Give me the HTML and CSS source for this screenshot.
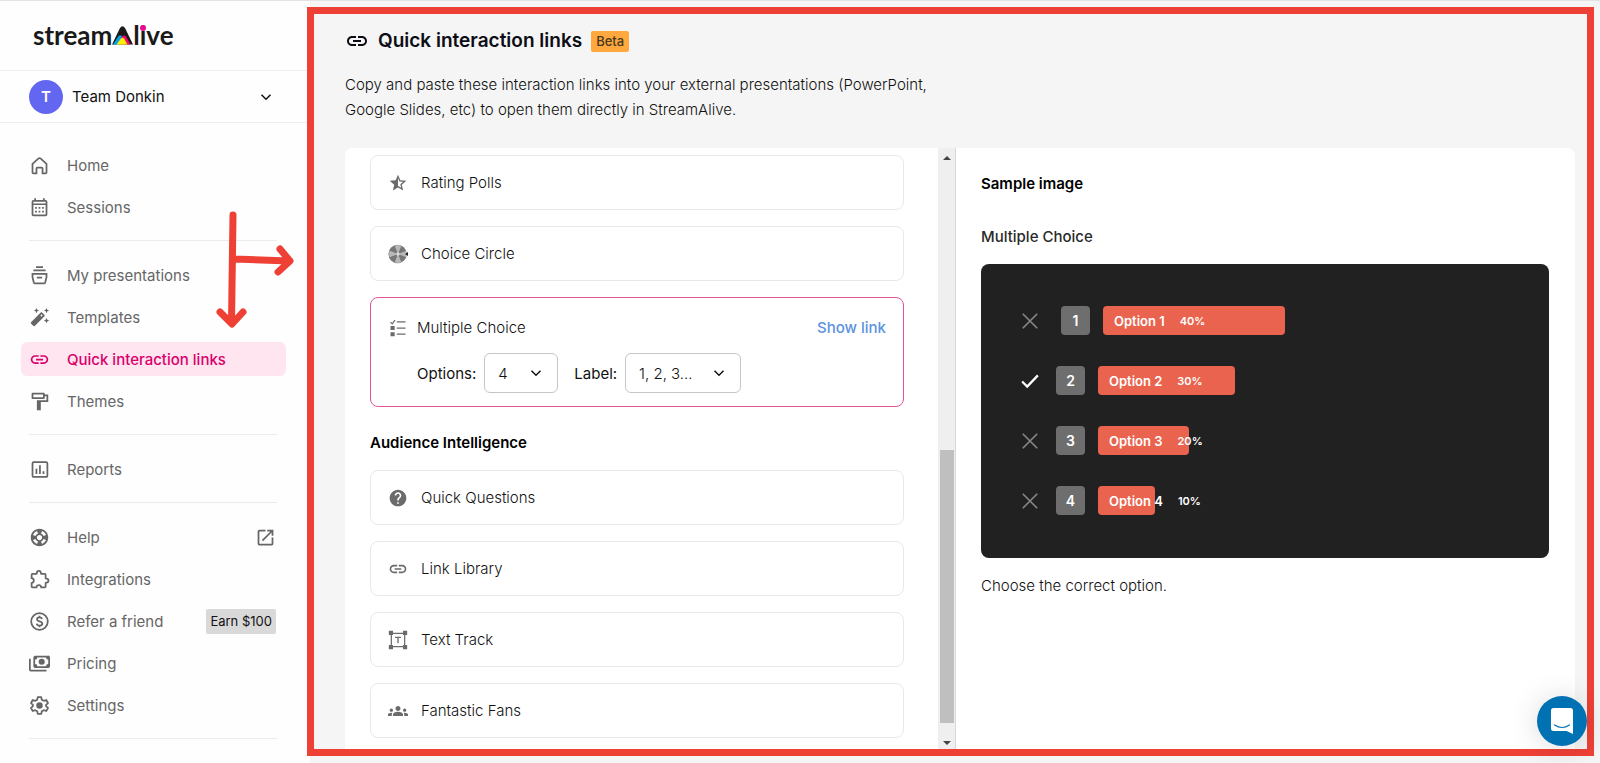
FILE: index.html
```
<!DOCTYPE html>
<html lang="en">
<head>
  <meta charset="UTF-8" />
  <meta name="viewport" content="width=device-width, initial-scale=1.0"/>
  <title>Quick interaction links - StreamAlive</title>
  <link rel="stylesheet" href="styles.css">
</head>
<body>
  <!-- Shared icons -->
  <svg class="sprite" aria-hidden="true">
    <symbol id="icon-link" viewBox="0 0 24 24">
      <path d="M3.9 12c0-1.71 1.39-3.1 3.1-3.1h4V7H7c-2.76 0-5 2.24-5 5s2.24 5 5 5h4v-1.9H7c-1.71 0-3.1-1.39-3.1-3.1zM8 13h8v-2H8v2zm9-6h-4v1.9h4c1.71 0 3.1 1.39 3.1 3.1s-1.39 3.1-3.1 3.1h-4V17h4c2.76 0 5-2.24 5-5s-2.24-5-5-5z"/>
    </symbol>
    <symbol id="icon-chevron" viewBox="0 0 12 12">
      <path d="M1.5 3.8 6 8.2l4.500-4.400" fill="none" stroke="currentColor" stroke-width="1.500"/>
    </symbol>
    <symbol id="icon-cross" viewBox="0 0 16 16">
      <path d="M2 2l12 12M14 2 2 14" fill="none" stroke="currentColor" stroke-width="1.500" stroke-linecap="round"/>
    </symbol>
  </svg>

  <div class="app">
    <aside class="sidebar">
      <div class="brand">
        <a href="#" class="logo" aria-label="streamAlive">
          <span>stream</span><svg class="logo-a" viewBox="0 0 21 19">
            <path d="M0 18.500 8 2Q10.500-1.500 13 2l8 16.500z" fill="#1a1a1a"/>
            <path d="M1 18.500 6.500 10Q8.500 8 10.500 11L7 18.500z" fill="#00a4e4"/>
            <path d="M9 12Q11 8 14 10.500l4.500 8H13z" fill="#ec0b6f"/>
            <path d="M4.500 18.500 9 12.500q1.500-1.500 3 0l3.500 6z" fill="#ffee00"/>
          </svg><span>l</span><span class="logo-i">i</span><span>ve</span>
        </a>
      </div>

      <button class="team" type="button">
        <span class="avatar">T</span>
        <span class="team-name">Team Donkin</span>
        <svg class="team-chevron"><use href="#icon-chevron"/></svg>
      </button>

      <nav class="nav">
        <ul>
          <li><a href="#">
            <svg class="icon outline" viewBox="0 0 24 24"><path d="M4 10.200 10.600 4.200q1.400-1.200 2.800 0L20 10.200V20q0 1-1 1h-3.500v-5.500q0-1-1-1h-5q-1 0-1 1V21H5q-1 0-1-1z"/></svg>
            Home</a></li>
          <li><a href="#">
            <svg class="icon" viewBox="0 0 24 24"><path d="M19 3.500h-1V1.500h-2v2H8v-2H6v2H5a2 2 0 0 0-2 2V20a2 2 0 0 0 2 2h14a2 2 0 0 0 2-2V5.500a2 2 0 0 0-2-2zM5 5.300h14v2H5zM5 20V9.200h14V20zM7 11.500h2v2H7zm4 0h2v2h-2zm4 0h2v2h-2zM7 15.700h2v2H7zm4 0h2v2h-2zm4 0h2v2h-2z"/></svg>
            Sessions</a></li>
        </ul>
        <ul>
          <li><a href="#">
            <svg class="icon outline" viewBox="0 0 24 24"><path d="M8 2.500h8M5 6h14M4 10h16v4l-1.500 6q-.3 1-1.200 1H6.700q-.9 0-1.200-1L4 14zM9 14.500h6"/></svg>
            My presentations</a></li>
          <li><a href="#">
            <svg class="icon" viewBox="0 0 24 24"><path d="M20 7l.94-2.060L23 4l-2.060-.94L20 1l-.94 2.060L17 4l2.060.94zM8.500 7l.94-2.060L11.500 4l-2.060-.94L8.500 1l-.94 2.060L5.500 4l2.060.94zM20 12.500l-.94 2.060-2.060.94 2.060.94.94 2.060.94-2.060L23 15.500l-2.060-.94zM17.710 9.120l-2.830-2.830c-.2-.19-.45-.29-.71-.29-.26 0-.51.1-.71.290L2.290 17.460a1 1 0 0 0 0 1.410l2.830 2.830c.2.200.45.300.71.300s.51-.1.710-.29l11.170-11.170c.39-.39.39-1.030 0-1.420zm-3.540-.7 1.410 1.410L14.410 11 13 9.590z"/></svg>
            Templates</a></li>
          <li class="active"><a href="#" aria-current="page">
            <svg class="icon"><use href="#icon-link"/></svg>
            Quick interaction links</a></li>
          <li><a href="#">
            <svg class="icon" viewBox="0 0 24 24"><path d="M18 4V3a1 1 0 0 0-1-1H4a1 1 0 0 0-1 1v5a1 1 0 0 0 1 1h13a1 1 0 0 0 1-1V6h2v4.500H9V22h4.500v-9.500H22V4zM5 4h11v3H5z"/></svg>
            Themes</a></li>
        </ul>
        <ul>
          <li><a href="#">
            <svg class="icon outline" viewBox="0 0 24 24"><rect x="4" y="3.500" width="17" height="17" rx="1.500"/><path d="M8.500 11v6M12.500 7v10M16.500 14v3"/></svg>
            Reports</a></li>
        </ul>
        <ul>
          <li><a href="#">
            <svg class="icon" viewBox="0 0 24 24"><path d="M12 2C6.480 2 2 6.480 2 12s4.480 10 10 10 10-4.480 10-10S17.520 2 12 2zm7.460 7.120-2.780 1.150a4.982 4.982 0 0 0-2.950-2.940l1.150-2.780c2.100.8 3.770 2.470 4.580 4.570zM12 15c-1.660 0-3-1.340-3-3s1.340-3 3-3 3 1.340 3 3-1.340 3-3 3zM9.130 4.540l1.170 2.780a5 5 0 0 0-2.980 2.970L4.540 9.130a7.984 7.984 0 0 1 4.590-4.590zM4.540 14.870l2.780-1.150a4.968 4.968 0 0 0 2.970 2.960l-1.170 2.780a7.996 7.996 0 0 1-4.580-4.590zm10.340 4.590-1.150-2.780a4.978 4.978 0 0 0 2.950-2.970l2.780 1.170a8.007 8.007 0 0 1-4.580 4.580z"/></svg>
            Help
            <svg class="icon trailing" viewBox="0 0 24 24"><path d="M19 19H5V5h7V3H5a2 2 0 0 0-2 2v14a2 2 0 0 0 2 2h14c1.100 0 2-.9 2-2v-7h-2v7zM14 3v2h3.590l-9.830 9.830 1.410 1.410L19 6.410V10h2V3h-7z"/></svg></a></li>
          <li><a href="#">
            <svg class="icon outline" viewBox="0 0 24 24"><path d="M3 6.500q0-1 1-1h4.500q.5 0 .5-1a2 2 0 0 1 4.500 0q0 1 .5 1H18q1 0 1 1v4q0 .5 1 .5a2 2 0 0 1 0 4.500q-1 0-1 .5v4q0 1-1 1h-4q-.3-2.500-2.750-2.500T8.500 21H4q-1 0-1-1v-4q2.500-.3 2.500-2.750T3 10.500z"/></svg>
            Integrations</a></li>
          <li><a href="#">
            <svg class="icon outline" viewBox="0 0 24 24"><circle cx="12" cy="12" r="9.500"/><path d="M15 9.300q-.5-2-3-2-2.800 0-2.800 2.200 0 1.700 2.800 2.400 3.200.7 3.200 2.600 0 2.200-3.100 2.200-2.900 0-3.200-2.200M12 5.500v2M12 16.500v2"/></svg>
            Refer a friend
            <span class="reward">Earn $100</span></a></li>
          <li><a href="#">
            <svg class="icon" viewBox="0 0 24 24"><path fill-rule="evenodd" d="M7 3h14.500A2.200 2.200 0 0 1 24 5v10a2 2 0 0 1-2 2H7a2 2 0 0 1-2-2V5a2 2 0 0 1 2-2zm2.500 2Q9.500 7.500 7 7.500v5Q9.500 12.500 9.500 15h10q0-2.500 2.500-2.500v-5Q19.500 7.500 19.500 5z"/><circle cx="14.500" cy="10" r="3.500"/><path d="M0 6.500h2V19h18v2H2a2 2 0 0 1-2-2z"/></svg>
            Pricing</a></li>
          <li><a href="#">
            <svg class="icon outline" viewBox="0 0 24 24"><path d="M10 2.500h4l.6 2.900 2.200 1.300 2.900-1 2 3.500-2.200 2v1.600l2.200 2-2 3.500-2.900-1-2.200 1.300-.6 2.900h-4l-.6-2.900-2.200-1.300-2.900 1-2-3.500 2.200-2v-1.600l-2.200-2 2-3.500 2.900 1 2.200-1.300z" stroke-linejoin="round"/><circle cx="12" cy="12" r="2.700" fill="currentColor"/></svg>
            Settings</a></li>
        </ul>
      </nav>
    </aside>

    <main class="main">
      <header class="page-header">
        <h1>
          <svg class="title-icon"><use href="#icon-link"/></svg>
          Quick interaction links
          <span class="beta">Beta</span>
        </h1>
        <p>Copy and paste these interaction links into your external presentations (PowerPoint, Google Slides, etc) to open them directly in StreamAlive.</p>
      </header>

      <div class="panel">
        <section class="interactions">
          <div class="list">
            <a href="#" class="item">
              <svg class="item-icon" viewBox="0 0 24 24"><path d="m22 9.240-7.190-.62L12 2 9.190 8.630 2 9.240l5.460 4.730L5.820 21 12 17.270 18.180 21l-1.630-7.030L22 9.240zM12 15.400V6.100l1.710 4.040 4.380.38-3.320 2.880 1 4.280L12 15.400z"/></svg>
              Rating Polls
            </a>
            <a href="#" class="item">
              <svg class="item-icon" viewBox="0 0 24 24">
                <circle cx="11.500" cy="12" r="11" fill="#777"/>
                <path d="M12 12 8 2a11 11 0 0 1 8 0zM12 12l10-4a11 11 0 0 1 0 8zM12 12l4 10a11 11 0 0 1-8 0zM12 12 2 16a11 11 0 0 1 0-8z" fill="#b8b8b8"/>
                <circle cx="12" cy="12" r="2" fill="#ddd"/>
                <path d="M20.500 12 24 9.500v5z" fill="#222"/>
              </svg>
              Choice Circle
            </a>

            <div class="item selected">
              <div class="selected-head">
                <svg class="item-icon" viewBox="0 0 24 24"><path d="M3 5l2 2 3.500-4.500" fill="none" stroke="currentColor" stroke-width="1.500"/><path d="M3 9.500h5v5H3zM3 17h5v5H3zM10.500 4H21v1.500H10.500zM10.500 11.300H21v1.500H10.500zM10.500 18.700H21v1.500H10.500z"/></svg>
                <span>Multiple Choice</span>
                <a href="#" class="show-link">Show link</a>
              </div>
              <div class="fields">
                <label for="optionCount">Options:</label>
                <div class="select">
                  <select id="optionCount">
                    <option>2</option>
                    <option>3</option>
                    <option selected>4</option>
                    <option>5</option>
                  </select>
                  <svg><use href="#icon-chevron"/></svg>
                </div>
                <label for="labelStyle">Label:</label>
                <div class="select wide">
                  <select id="labelStyle">
                    <option>1, 2, 3...</option>
                    <option>A, B, C...</option>
                  </select>
                  <svg><use href="#icon-chevron"/></svg>
                </div>
              </div>
            </div>

            <h2>Audience Intelligence</h2>

            <a href="#" class="item">
              <svg class="item-icon" viewBox="0 0 24 24"><path d="M12 2C6.480 2 2 6.480 2 12s4.480 10 10 10 10-4.480 10-10S17.520 2 12 2zm1 17h-2v-2h2v2zm2.070-7.750-.9.920C13.450 12.900 13 13.500 13 15h-2v-.5c0-1.100.45-2.100 1.170-2.830l1.240-1.260c.37-.36.590-.86.590-1.410 0-1.100-.9-2-2-2s-2 .9-2 2H8c0-2.210 1.790-4 4-4s4 1.790 4 4c0 .88-.36 1.680-.93 2.250z"/></svg>
              Quick Questions
            </a>
            <a href="#" class="item">
              <svg class="item-icon"><use href="#icon-link"/></svg>
              Link Library
            </a>
            <a href="#" class="item">
              <svg class="item-icon" viewBox="0 0 24 24"><path d="M4 4h16v16H4z" fill="none" stroke="currentColor" stroke-width="1.500"/><path d="M1 1h5v5H1zM18 1h5v5h-5zM1 18h5v5H1zM18 18h5v5h-5zM8.500 8h7v1.500h-2.700V16h-1.600V9.500H8.500z"/></svg>
              Text Track
            </a>
            <a href="#" class="item">
              <svg class="item-icon" viewBox="0 0 24 24"><path d="M12 12.750c1.630 0 3.070.39 4.240.9 1.080.48 1.760 1.560 1.760 2.730V18H6v-1.610c0-1.180.68-2.260 1.760-2.730 1.170-.52 2.610-.91 4.240-.91zM4 13c1.100 0 2-.9 2-2s-.9-2-2-2-2 .9-2 2 .9 2 2 2zm1.130 1.100A6.950 6.950 0 0 0 4 14c-.99 0-1.930.21-2.780.58A2.010 2.010 0 0 0 0 16.430V18h4.500v-1.610c0-.83.23-1.610.63-2.290zM20 13c1.100 0 2-.9 2-2s-.9-2-2-2-2 .9-2 2 .9 2 2 2zm4 3.430c0-.81-.48-1.530-1.220-1.850A6.950 6.950 0 0 0 20 14c-.39 0-.76.04-1.130.1.400.68.630 1.460.63 2.290V18H24v-1.570zM12 6c1.660 0 3 1.340 3 3s-1.340 3-3 3-3-1.340-3-3 1.340-3 3-3z"/></svg>
              Fantastic Fans
            </a>
          </div>
          <div class="scrollbar">
            <span class="arrow-up"></span>
            <span class="track"><span class="thumb"></span></span>
            <span class="arrow-down"></span>
          </div>
        </section>

        <section class="sample">
          <h2>Sample image</h2>
          <h3>Multiple Choice</h3>
          <div class="preview" id="preview">
            <!-- Option rows are inserted here -->
          </div>
          <p>Choose the correct option.</p>
        </section>
      </div>

      <div class="frame"></div>
    </main>
  </div>

  <!-- Callout arrows from the menu to the framed area -->
  <svg class="callout" viewBox="0 0 90 130" aria-hidden="true">
    <path d="M22 10 20.500 118M9 107l12 12 11-12M23 54l55 2M69 44l10 12-12 11"/>
  </svg>

  <button class="chat" type="button" aria-label="Open chat">
    <svg viewBox="0 0 24 28">
      <path d="M3.500 1h17Q23 1 23 3.500V27l-6.500-3h-13Q1 24 1 21.500v-18Q1 1 3.500 1z" fill="#fff"/>
      <path d="M4.500 18q7.500 5 15 0" fill="none" stroke="#0071b2" stroke-width="1.200" stroke-linecap="round"/>
    </svg>
  </button>

  <script>
    const options = [
      { label: "Option 1", percent: 40, width: 182 },
      { label: "Option 2", percent: 30, width: 137 },
      { label: "Option 3", percent: 20, width: 91 },
      { label: "Option 4", percent: 10, width: 57 },
    ];
    const correct = 2;

    const cross = '<svg class="mark"><use href="#icon-cross"/></svg>';
    const check = '<svg class="mark correct" viewBox="0 0 16 16"><path d="M1 8.500l4.500 4.500L15 3"/></svg>';

    const preview = document.getElementById('preview');
    options.forEach((option, index) => {
      const number = index + 1;
      preview.insertAdjacentHTML('beforeend', `
        <div class="option">
          ${number === correct ? check : cross}
          <span class="number">${number}</span>
          <div class="bar" style="width: ${option.width}px">
            <span>${option.label}</span>
            <span class="percent">${option.percent}%</span>
          </div>
        </div>
      `);
    });
  </script>
</body>
</html>
```
FILE: styles.css
```
* {
  box-sizing: border-box;
}
body {
  margin: 0;
  font-family: Inter, "Liberation Sans", sans-serif;
  font-size: 15px;
  color: #111;
  background: #f5f5f5;
}
a {
  color: inherit;
  text-decoration: none;
}
h1, h2, h3, p, ul {
  margin: 0;
  padding: 0;
}
button, select {
  font: inherit;
  color: inherit;
}
svg {
  flex-shrink: 0;
  fill: currentColor;
}
.sprite {
  position: absolute;
  width: 0;
  height: 0;
}
.app {
  display: flex;
  height: 100vh;
  border-top: 1px solid #e3e3e3;
}

/* Sidebar */
.sidebar {
  flex: 0 0 310px;
  background: #fefefe;
}
.brand {
  height: 69px;
  padding: 18px 33px 0;
}
.logo {
  display: flex;
  align-items: baseline;
  font-family: Lato, sans-serif;
  font-size: 26px;
  line-height: 32px;
  font-weight: 700;
  color: #1a1a1a;
}
.logo-a {
  width: 21px;
  height: 19px;
}
.logo-i {
  position: relative;
}
.logo-i::after {
  content: "";
  position: absolute;
  top: 6px;
  left: 0;
  width: 6px;
  height: 6px;
  border-radius: 50%;
  background: #ec0b8f;
}
.team {
  display: flex;
  align-items: center;
  gap: 9px;
  width: 100%;
  height: 53px;
  padding: 0 38px 0 29px;
  border: solid #ededed;
  border-width: 1px 0;
  background: none;
  text-align: left;
  cursor: pointer;
}
.avatar {
  width: 34px;
  height: 34px;
  border-radius: 50%;
  background: #6366f1;
  color: #fff;
  font-weight: 600;
  line-height: 34px;
  text-align: center;
}
.team-name {
  flex: 1;
}
.team-chevron {
  width: 12px;
  height: 12px;
}
.nav {
  padding: 25px 24px 0 21px;
}
.nav ul {
  display: flex;
  flex-direction: column;
  gap: 8px;
  list-style: none;
  padding-bottom: 17px;
  margin-bottom: 17px;
  position: relative;
}
.nav ul::after {
  content: "";
  position: absolute;
  left: 8px;
  right: 9px;
  bottom: 0;
  border-bottom: 1px solid #ebebeb;
}
.nav a {
  display: flex;
  align-items: center;
  gap: 17px;
  height: 34px;
  padding: 0 10px 0 8px;
  border-radius: 6px;
  color: #666;
}
.nav .active a {
  background: #ffe5f0;
  color: #d9006c;
  font-weight: 500;
}
.icon {
  width: 21px;
  height: 21px;
}
.outline {
  fill: none;
  stroke: currentColor;
  stroke-width: 2;
}
.trailing {
  margin-left: auto;
}
.reward {
  margin-left: auto;
  padding: 0 4px;
  border-radius: 2px;
  background: #d9d9d9;
  color: #111;
  font-size: 13px;
  line-height: 25px;
}

/* Main area */
.main {
  position: relative;
  flex: 1;
  min-width: 0;
  display: flex;
  flex-direction: column;
  padding: 28px 25px 10px 35px;
  background: #f5f5f5;
}
.frame {
  position: absolute;
  inset: 6px 6px 7px -3px;
  border: 7px solid #ef4036;
  pointer-events: none;
}
.page-header {
  padding-bottom: 26px;
}
h1 {
  display: flex;
  align-items: center;
  gap: 9px;
  font-size: 19px;
  line-height: 24px;
  font-weight: 600;
  color: #0c0c14;
}
.title-icon {
  width: 24px;
  height: 24px;
}
.beta {
  padding: 0 5px;
  border-radius: 2px;
  background: #ffa83d;
  color: #4a3a20;
  font-size: 13px;
  line-height: 21px;
  font-weight: 500;
}
.page-header p {
  max-width: 600px;
  margin-top: 19px;
  line-height: 25px;
  font-weight: 300;
}
.panel {
  flex: 1;
  min-height: 0;
  display: grid;
  grid-template-columns: minmax(0, 611fr) minmax(0, 619fr);
  border-radius: 8px 8px 0 0;
  background: #fff;
}
.interactions {
  display: flex;
  min-height: 0;
  border-right: 1px solid #d8d8d8;
}
.list {
  flex: 1;
  overflow: hidden;
  padding: 7px 34px 0 25px;
}
.item {
  display: flex;
  align-items: center;
  gap: 13px;
  height: 55px;
  margin-bottom: 16px;
  padding: 0 17px;
  border: 1px solid #e6e9ea;
  border-radius: 8px;
  font-weight: 300;
}
.item-icon {
  width: 20px;
  height: 20px;
  color: #6b6b6b;
}
.selected {
  display: block;
  height: auto;
  padding: 20px 17px 13px;
  border-color: #e0559a;
}
.selected-head {
  display: flex;
  align-items: center;
  gap: 9px;
  line-height: 20px;
}
.show-link {
  margin-left: auto;
  color: #5b93e0;
  font-weight: 500;
}
.fields {
  display: flex;
  align-items: center;
  gap: 8px;
  margin-top: 15px;
  padding-left: 29px;
  font-weight: 400;
}
.select {
  position: relative;
  width: 74px;
  margin-right: 8px;
}
.select.wide {
  width: 116px;
}
.select select {
  appearance: none;
  width: 100%;
  height: 40px;
  padding: 0 13px;
  border: 1px solid #c6c6c6;
  border-radius: 6px;
  background: #fff;
  font-weight: 300;
}
.select svg {
  position: absolute;
  top: 14px;
  right: 16px;
  width: 12px;
  height: 12px;
  pointer-events: none;
}
h2 {
  font-size: 15px;
  line-height: 20px;
  font-weight: 600;
  color: #000;
}
.list h2 {
  margin: 26px 0 17px;
}
.scrollbar {
  display: flex;
  flex-direction: column;
  align-items: center;
  width: 17px;
  padding: 8px 0;
  background: #efefef;
}
.track {
  flex: 1;
  display: flex;
  flex-direction: column;
  justify-content: flex-end;
  width: 14px;
  padding: 6px 0 18px;
}
.thumb {
  height: 49%;
  background: #bfbfbf;
}
.arrow-up, .arrow-down {
  border: 4px solid transparent;
}
.arrow-up {
  border-top: 0;
  border-bottom-color: #444;
}
.arrow-down {
  border-bottom: 0;
  border-top-color: #444;
}

/* Sample preview */
.sample {
  padding: 26px 26px 0 25px;
}
.sample h3 {
  margin: 33px 0 17px;
  font-size: 15px;
  line-height: 20px;
  font-weight: 500;
  color: #2a2a2a;
}
.sample p {
  margin-top: 18px;
  line-height: 20px;
  font-weight: 300;
}
.preview {
  display: flex;
  flex-direction: column;
  gap: 31px;
  padding: 42px 40px 43px;
  border-radius: 8px;
  background: #212121;
}
.option {
  display: flex;
  align-items: center;
  gap: 13px;
  color: #fff;
  font-size: 13px;
  font-weight: 600;
}
.mark {
  width: 18px;
  height: 18px;
  margin-right: 4px;
  color: #858585;
}
.option:first-child .mark {
  margin-right: 9px;
}
.correct {
  fill: none;
  stroke: #fff;
  stroke-width: 2;
}
.number {
  width: 29px;
  border-radius: 4px;
  background: #6e6e6e;
  font-size: 14px;
  line-height: 29px;
  text-align: center;
}
.bar {
  display: flex;
  align-items: center;
  gap: 15px;
  height: 29px;
  padding-left: 11px;
  border-radius: 4px;
  background: #e9634e;
  white-space: nowrap;
}
.percent {
  font-size: 11px;
}

/* Overlays */
.callout {
  position: absolute;
  top: 205px;
  left: 211px;
  width: 90px;
  height: 130px;
  fill: none;
  stroke: #ef4036;
  stroke-width: 7;
  stroke-linecap: round;
  stroke-linejoin: round;
  pointer-events: none;
}
.chat {
  position: fixed;
  right: 13px;
  bottom: 17px;
  display: flex;
  align-items: center;
  justify-content: center;
  width: 50px;
  height: 50px;
  padding: 0;
  border: 0;
  border-radius: 50%;
  background: #0071b2;
  box-shadow: 0 2px 30px rgba(0, 0, 0, 0.15);
  cursor: pointer;
}
.chat svg {
  width: 24px;
  height: 28px;
}
```
